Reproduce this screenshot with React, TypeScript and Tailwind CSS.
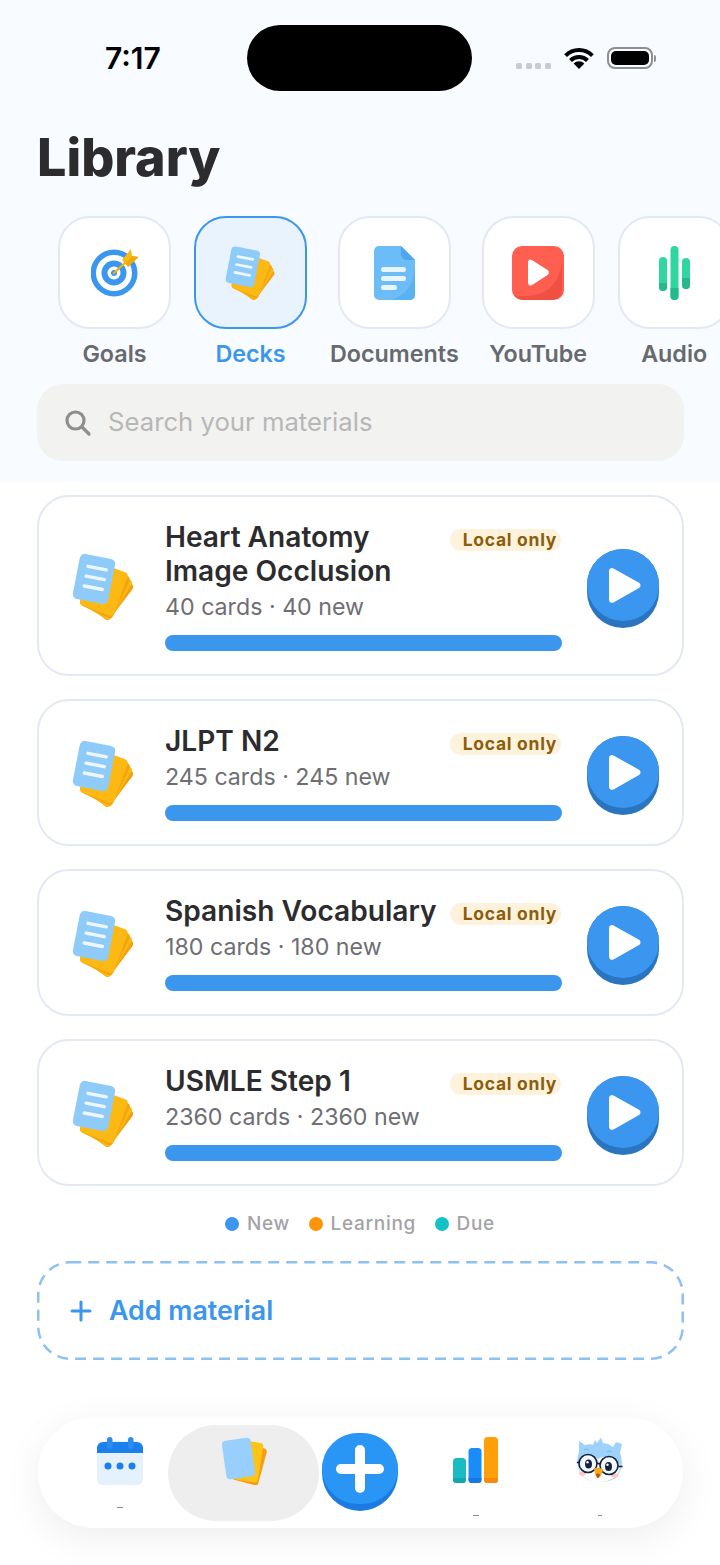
import React from "react";

const FONT = { fontFamily: "Inter, 'Noto Sans', sans-serif" };

function DeckIcon({ className }: { className?: string }) {
  return (
    <svg viewBox="0 0 63 68" className={className}>
      <rect x="-18" y="-22" width="36" height="44" rx="4" fill="#f59f0a" transform="translate(35 41) rotate(37)" />
      <rect x="-18" y="-23" width="36" height="46" rx="4" fill="#fdb913" transform="translate(34 40) rotate(31)" />
      <rect x="-18" y="-23" width="36" height="46" rx="4" fill="#f5a50c" transform="translate(33 39) rotate(25)" />
      <rect x="-18" y="-23" width="36" height="46" rx="4" fill="#fdb913" transform="translate(32 37) rotate(20)" />
      <g transform="translate(22 27) rotate(11)">
        <rect x="-18" y="-23" width="36" height="46" rx="5" fill="#8ecbf8" />
        <rect x="-10" y="-13" width="22" height="3.4" rx="1.7" fill="#eef7ff" />
        <rect x="-10" y="-3" width="22" height="3.4" rx="1.7" fill="#eef7ff" />
        <rect x="-10" y="7" width="22" height="3.4" rx="1.7" fill="#eef7ff" />
      </g>
    </svg>
  );
}

function GoalIcon() {
  return (
    <svg viewBox="0 0 48 48" className="w-[48px] h-[48px]">
      <circle cx="23" cy="24" r="23.5" fill="#3b96f0" />
      <circle cx="23" cy="24" r="18" fill="#ffffff" />
      <circle cx="23" cy="24" r="12.5" fill="#3b96f0" />
      <circle cx="23" cy="24" r="6.5" fill="#ffffff" />
      <circle cx="23" cy="24" r="3" fill="#3b96f0" />
      <path d="M23 24 L36 12" stroke="#eeb10c" strokeWidth="2.2" strokeLinecap="round" />
      <path d="M31 11 L40 0 L41 7 L47.5 8 L37 18 Z" fill="#fbbc12" />
      <path d="M35 14 L41 7 L47.5 8 L37 18 Z" fill="#eea90c" />
    </svg>
  );
}

function DocIcon() {
  return (
    <svg viewBox="0 0 41 54" className="w-[41px] h-[54px]">
      <path d="M5 0 H27 L41 14 V49 a5 5 0 0 1 -5 5 H5 a5 5 0 0 1 -5 -5 V5 a5 5 0 0 1 5 -5 Z" fill="#6cbdf7" />
      <path d="M41 20 V49 a5 5 0 0 1 -5 5 H16 C32 50 40 38 41 20 Z" fill="#5ab2f3" />
      <path d="M27 0 L41 14 H33 a6 6 0 0 1 -6 -6 Z" fill="#4fa6ee" />
      <rect x="7" y="21" width="25" height="5" rx="2.5" fill="#e8f5ff" />
      <rect x="7" y="30" width="25" height="5" rx="2.5" fill="#e8f5ff" />
      <rect x="7" y="39" width="16" height="5" rx="2.5" fill="#e8f5ff" />
    </svg>
  );
}

function YoutubeIcon() {
  return (
    <svg viewBox="0 0 52 54" className="w-[52px] h-[54px]">
      <rect width="52" height="54" rx="10" fill="#fe5f50" />
      <path d="M50 16 V44 a10 10 0 0 1 -10 10 H12 a10 10 0 0 1 -8 -4 C28 52 46 44 50 16 Z" fill="#f24f43" />
      <path d="M16 16 a2.5 2.5 0 0 1 3.8 -2.1 L35.5 24 a3 3 0 0 1 0 5 L19.8 39.2 a2.5 2.5 0 0 1 -3.8 -2.1 Z" fill="#ffffff" />
    </svg>
  );
}

function AudioIcon() {
  return (
    <svg viewBox="0 0 31 54" className="w-[31px] h-[54px]">
      <rect x="0" y="11" width="8" height="34" rx="4" fill="#2fd6a0" />
      <path d="M0 37 H8 V41 a4 4 0 0 1 -8 0 Z" fill="#26b98d" />
      <rect x="11.5" y="0" width="8" height="54" rx="4" fill="#2fd6a0" />
      <path d="M11.5 42 H19.5 V50 a4 4 0 0 1 -8 0 Z" fill="#26b98d" />
      <rect x="23" y="12" width="8" height="31" rx="4" fill="#2fd6a0" />
      <path d="M23 32 H31 V39 a4 4 0 0 1 -8 0 Z" fill="#26b98d" />
    </svg>
  );
}

function CalendarIcon() {
  return (
    <svg viewBox="0 0 46 48" className="w-[46px] h-[48px]">
      <rect y="4" width="46" height="44" rx="6" fill="#e6f1fe" />
      <path d="M6 5 H40 a6 6 0 0 1 6 6 V16 H0 V11 a6 6 0 0 1 6 -6 Z" fill="#1b80ec" />
      <rect x="10" y="0" width="5.5" height="12" rx="2.75" fill="#2f8cef" />
      <rect x="31" y="0" width="5.5" height="12" rx="2.75" fill="#2f8cef" />
      <circle cx="11" cy="29" r="3.5" fill="#1b80ec" />
      <circle cx="23" cy="29" r="3.5" fill="#1b80ec" />
      <circle cx="35" cy="29" r="3.5" fill="#1b80ec" />
    </svg>
  );
}

function NavDeckIcon() {
  return (
    <svg viewBox="0 0 46 48" className="w-[46px] h-[48px]">
      <rect x="-14" y="-19" width="28" height="38" rx="3" fill="#fb9a0e" transform="translate(28 27) rotate(15)" />
      <rect x="-14" y="-19" width="28" height="40" rx="3" fill="#fcc419" transform="translate(26 23) rotate(9)" />
      <rect x="-14.5" y="-19.5" width="29" height="39" rx="4" fill="#99cffc" transform="translate(17.5 21.5) rotate(-8)" />
    </svg>
  );
}

function StatsIcon() {
  return (
    <svg viewBox="0 0 46 46" className="w-[46px] h-[46px]">
      <rect y="21" width="13" height="25" rx="3.5" fill="#19bcc1" />
      <path d="M0 41 H13 V42.5 a3.5 3.5 0 0 1 -3.5 3.5 H3.5 a3.5 3.5 0 0 1 -3.5 -3.5 Z" fill="#12a8ae" />
      <rect x="15.5" y="11" width="13" height="35" rx="3.5" fill="#1a8cf8" />
      <path d="M15.5 41 H28.5 V42.5 a3.5 3.5 0 0 1 -3.5 3.5 H19 a3.5 3.5 0 0 1 -3.5 -3.5 Z" fill="#1679e0" />
      <rect x="31" y="0" width="14" height="46" rx="3.5" fill="#ff9f0a" />
      <path d="M31 41 H45 V42.5 a3.5 3.5 0 0 1 -3.5 3.5 H34.5 a3.5 3.5 0 0 1 -3.5 -3.5 Z" fill="#f78a0c" />
    </svg>
  );
}

function OwlIcon() {
  return (
    <svg viewBox="0 0 48 48" className="w-[48px] h-[48px]">
      <path d="M3 4 L9 8 L14 7 L17 8 L19 3 L21 6 L25 0.5 L27 6 L32 7 L37 10 L40 5 L46 7 L44 16 C47 24 47 36 38 42 C30 46 16 46 9 41 C1 36 0 22 3 15 Z" fill="#9dd2fb" />
      <path d="M3 27 C4 19 13 15 22 22 C32 17 43 20 44 30 C44 39 34 45 23 45 C12 45 2 38 3 27 Z" fill="#ffffff" />
      <circle cx="12" cy="26.5" r="9" fill="#f4faff" />
      <circle cx="33" cy="28.5" r="9" fill="#f4faff" />
      <ellipse cx="6.5" cy="36.5" rx="3.5" ry="2.2" fill="#fbc9c0" />
      <ellipse cx="38.5" cy="38.5" rx="3.5" ry="2.2" fill="#fbc9c0" />
      <circle cx="12" cy="26.5" r="9" fill="none" stroke="#10233f" strokeWidth="1.6" />
      <circle cx="33" cy="28.5" r="9" fill="none" stroke="#10233f" strokeWidth="1.6" />
      <path d="M0.8 25.5 H3 M42 29.5 H46.6 M21 26.5 C22 26 23 26.5 24 27" stroke="#10233f" strokeWidth="1.6" fill="none" />
      <ellipse cx="12.5" cy="27" rx="3.5" ry="4.5" fill="#10233f" />
      <ellipse cx="32.5" cy="29.5" rx="3.5" ry="4.5" fill="#10233f" />
      <circle cx="11.5" cy="25.2" r="1.2" fill="#ffffff" />
      <circle cx="31.5" cy="27.7" r="1.2" fill="#ffffff" />
      <path d="M18 31.5 C20 30 25 30.5 27 32.5 C26 37 24 41 22 41 C20 41 18.5 36 18 31.5 Z" fill="#f9a91e" />
      <path d="M20 37 C21 36 23 36.5 24 37.5 C23.5 39.5 22.5 41 22 41 C21 41 20.5 39 20 37 Z" fill="#a8571a" />
      <path d="M8 13 C10 11.5 12 12 13 14 M31 15 C32 13.5 34 13.5 36 15" stroke="#6fb5ef" strokeWidth="1" fill="none" />
    </svg>
  );
}

function Tab({ label, active, children }: { label: string; active?: boolean; children: React.ReactNode }) {
  return (
    <div className="flex flex-col items-center shrink-0 min-w-[113px]">
      <div
        className={
          active
            ? "w-[113px] h-[113px] rounded-[32px] border-2 border-[#3b96ee] bg-[#e9f3fe] flex items-center justify-center"
            : "w-[113px] h-[113px] rounded-[32px] border-2 border-[#e3e9f3] bg-white flex items-center justify-center"
        }
      >
        {children}
      </div>
      <span
        className={
          active
            ? "mt-[11px] text-[23.3px] leading-[27px] font-semibold text-[#3b96ee] whitespace-nowrap"
            : "mt-[11px] text-[23.3px] leading-[27px] font-semibold text-[#66696e] whitespace-nowrap"
        }
      >
        {label}
      </span>
    </div>
  );
}

function DeckCard({ title, sub }: { title: string[]; sub: string }) {
  return (
    <div className="flex items-center rounded-[32px] border-2 border-[#e3e9f3] bg-white pl-[33px] pr-[22px] py-[23px]">
      <DeckIcon className="w-[63px] h-[68px] shrink-0" />
      <div className="ml-[30px] w-[397px] shrink-0">
        <div className="flex justify-between items-start">
          <div className="text-[28.1px] leading-[34px] font-semibold text-[#2c2c2e] whitespace-nowrap">
            {title.map((t) => (
              <div key={t}>{t}</div>
            ))}
          </div>
          <span className="mt-[9px] mr-[1px] rounded-full bg-[#fdf3dc] pl-[13px] pr-[4px] h-[22px] flex items-center text-[17.5px] font-bold tracking-[0.7px] text-[#8f5c0b] whitespace-nowrap">
            Local only
          </span>
        </div>
        <div className="mt-[4px] text-[23.2px] leading-[30px] text-[#6e6e73]">{sub}</div>
        <div className="mt-[13px] h-[16px] rounded-full bg-[#3b96ee]" />
      </div>
      <div className="ml-[25px] mt-[6px] w-[72px] h-[79px] rounded-full bg-[#2a74c0] shrink-0">
        <div className="w-[72px] h-[72px] rounded-full bg-[#3b96f0] flex items-center justify-center">
          <svg viewBox="0 0 34 37" className="w-[34px] h-[37px] ml-[4px]">
            <path d="M1 4 a3 3 0 0 1 4.5 -2.6 L31 15.8 a3 3 0 0 1 0 5.2 L5.5 35.4 A3 3 0 0 1 1 32.8 Z" fill="#ffffff" />
          </svg>
        </div>
      </div>
    </div>
  );
}

function Legend({ color, label }: { color: string; label: string }) {
  return (
    <div className="flex items-center gap-[8px]">
      <span className={`w-[14px] h-[14px] rounded-full ${color}`} />
      <span className="text-[19px] leading-[24px] font-medium tracking-[0.7px] text-[#a3a3a6]">{label}</span>
    </div>
  );
}

export default function App() {
  return (
    <div style={FONT} className="w-[720px] h-[1565px] bg-white overflow-hidden">
      {/* Header */}
      <div className="h-[482px] bg-[#f8fbff] overflow-hidden">
        <div className="flex items-center h-[66px] mt-[25px] pl-[105px]">
          <span className="w-[142px] text-[30px] leading-[66px] font-semibold text-black">7:17</span>
          <div className="w-[225px] h-[66px] rounded-full bg-black" />
          <div className="ml-[44px] mt-[16px] flex gap-[3.5px]">
            <span className="w-[6px] h-[6px] rounded-[1.5px] bg-[#c8ccd0]" />
            <span className="w-[6px] h-[6px] rounded-[1.5px] bg-[#c8ccd0]" />
            <span className="w-[6px] h-[6px] rounded-[1.5px] bg-[#c8ccd0]" />
            <span className="w-[6px] h-[6px] rounded-[1.5px] bg-[#c8ccd0]" />
          </div>
          <svg viewBox="0 0 30 22" className="w-[30px] h-[22px] ml-[13px]" fill="none">
            <path d="M1.6 8.6 A19 19 0 0 1 28.4 8.6" stroke="#000" strokeWidth="4" />
            <path d="M6.5 13.5 A12 12 0 0 1 23.5 13.5" stroke="#000" strokeWidth="4" />
            <path d="M15 22 L9.6 16.6 A7.6 7.6 0 0 1 20.4 16.6 Z" fill="#000" />
          </svg>
          <div className="ml-[13px] flex items-center">
            <div className="w-[46px] h-[22px] rounded-[8px] border-2 border-[#8e8e8e] p-[2px]">
              <div className="w-full h-full rounded-[5px] bg-black" />
            </div>
            <div className="w-[2px] h-[7px] rounded-r-full bg-[#8e8e8e] ml-[1px]" />
          </div>
        </div>

        <h1 className="mt-[35px] ml-[37px] text-[52px] leading-[64px] font-extrabold text-[#2c2c2e]">Library</h1>

        <div className="mt-[26px] pl-[58px] flex gap-[23px] w-[1000px]">
          <Tab label="Goals"><GoalIcon /></Tab>
          <Tab label="Decks" active><DeckIcon className="w-[51px] h-[55px]" /></Tab>
          <Tab label="Documents"><DocIcon /></Tab>
          <Tab label="YouTube"><YoutubeIcon /></Tab>
          <Tab label="Audio"><AudioIcon /></Tab>
        </div>

        {/* Search */}
        <div className="mt-[17px] ml-[37px] mr-[36px] h-[77px] rounded-[26px] bg-[#f2f2f0] flex items-center pl-[27px]">
          <svg viewBox="0 0 28 28" className="w-[28px] h-[28px]" fill="none" stroke="#8e8e8e" strokeWidth="3.2" strokeLinecap="round">
            <circle cx="11.5" cy="11.5" r="8.5" />
            <path d="M18 18 L25 25" />
          </svg>
          <span className="ml-[16px] text-[25.7px] text-[#b7b7b7]">Search your materials</span>
        </div>
      </div>

      {/* List */}
      <div className="mt-[13px] ml-[37px] mr-[36px] flex flex-col gap-[23px]">
        <DeckCard title={["Heart Anatomy", "Image Occlusion"]} sub="40 cards · 40 new" />
        <DeckCard title={["JLPT N2"]} sub="245 cards · 245 new" />
        <DeckCard title={["Spanish Vocabulary"]} sub="180 cards · 180 new" />
        <DeckCard title={["USMLE Step 1"]} sub="2360 cards · 2360 new" />
      </div>

      <div className="mt-[26px] flex justify-center gap-[18.5px]">
        <Legend color="bg-[#3b96f0]" label="New" />
        <Legend color="bg-[#ff950a]" label="Learning" />
        <Legend color="bg-[#14c1c6]" label="Due" />
      </div>

      {/* Add material */}
      <div className="relative mt-[25px] ml-[37px] mr-[36px] h-[99px] flex items-center pl-[33px] gap-[17px]">
        <svg className="absolute inset-0 w-full h-full" viewBox="0 0 647 99" fill="none">
          <rect x="1.25" y="1.25" width="644.5" height="96.5" rx="32" stroke="#8cc1f2" strokeWidth="2.5" strokeDasharray="11 7" />
        </svg>
        <svg viewBox="0 0 22 22" className="w-[22px] h-[22px]" stroke="#3b96ee" strokeWidth="3" strokeLinecap="round">
          <path d="M11 2 V20 M2 11 H20" />
        </svg>
        <span className="text-[26.8px] font-semibold text-[#3b96ee]">Add material</span>
      </div>

      {/* Bottom nav */}
      <div className="mt-[57px] ml-[38px] h-[111px] w-[645px] rounded-full bg-white shadow-[0_10px_40px_rgba(0,0,0,0.07)] flex items-start">
        <div className="ml-[34px] mt-[20px] w-[96px] flex flex-col items-center">
          <CalendarIcon />
          <div className="mt-[22px] w-[6px] h-px bg-[#888]" />
        </div>
        <div className="mt-[8px] w-[151px] h-[96px] rounded-full bg-[#eeeeee] flex justify-center pt-[12px]">
          <NavDeckIcon />
        </div>
        <div className="ml-[3px] mt-[16px] w-[76px] h-[78px] rounded-full bg-[#1b7be0]">
          <div className="w-[76px] h-[71px] rounded-full bg-[#2996f5] flex items-center justify-center">
            <svg viewBox="0 0 48 48" className="w-[48px] h-[48px]" stroke="#ffffff" strokeWidth="10" strokeLinecap="round">
              <path d="M24 5 V43 M5 24 H43" />
            </svg>
          </div>
        </div>
        <div className="ml-[30px] mt-[20px] w-[96px] flex flex-col items-center">
          <StatsIcon />
          <div className="mt-[32px] w-[6px] h-px bg-[#888]" />
        </div>
        <div className="ml-[28px] mt-[20px] w-[96px] flex flex-col items-center">
          <OwlIcon />
          <div className="mt-[30px] w-[4px] h-px bg-[#888]" />
        </div>
      </div>
    </div>
  );
}
